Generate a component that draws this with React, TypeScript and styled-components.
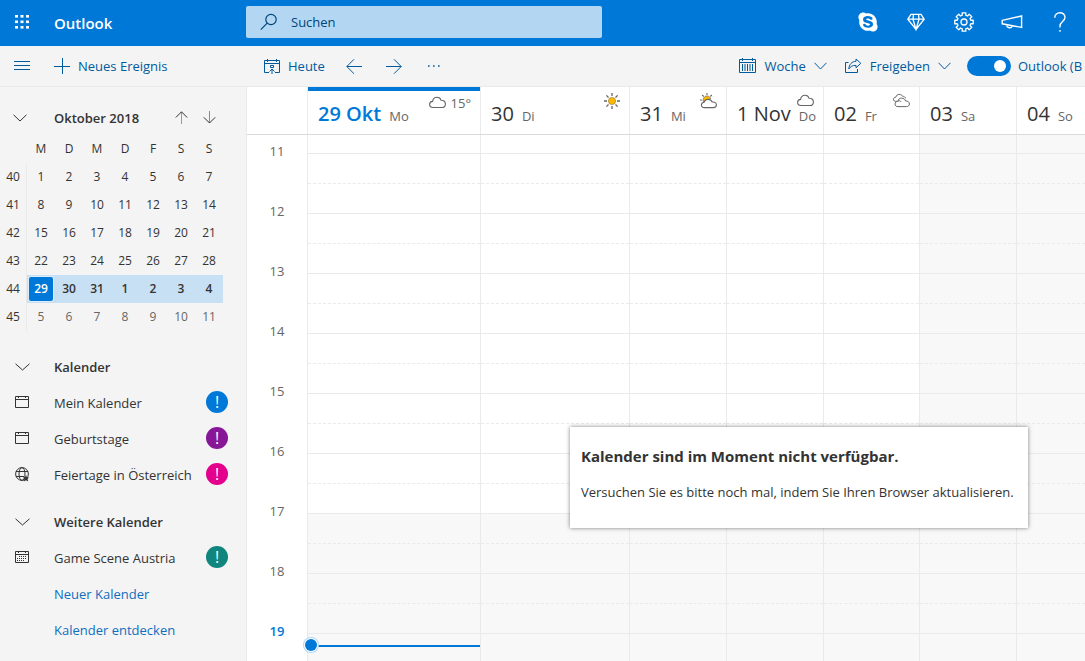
import React from "react";
import styled, { createGlobalStyle, css } from "styled-components";
import { FaSkype } from "react-icons/fa";

const color = {
  brand: "#0078d7",
  action: "#005a9e",
  link: "#106ebe",
  panel: "#f4f4f4",
  line: "#eaeaea",
  text: "#333333",
  muted: "#666666",
  off: "#f8f8f8",
};

const GlobalStyle = createGlobalStyle`
  * { box-sizing: border-box; }
  body {
    margin: 0;
    overflow: hidden;
    color: ${color.text};
    font-family: "Open Sans", "Noto Sans", sans-serif;
    font-size: 13px;
    line-height: 20px;
  }
  button, input { font: inherit; color: inherit; }
  h1, h2, h3, p, ul { margin: 0; padding: 0; font-size: inherit; }
  svg { display: block; flex: none; }
`;

const Page = styled.div`
  display: flex;
  flex-direction: column;
  height: 100vh;
`;

const IconButton = styled.button<{ $w?: number }>`
  display: flex;
  align-items: center;
  justify-content: center;
  flex: none;
  width: ${(p) => p.$w ?? 48}px;
  height: 100%;
  padding: 0;
  border: 0;
  background: none;
  cursor: pointer;
`;

/* top bar */
const TopBar = styled.header`
  display: flex;
  align-items: center;
  flex: none;
  height: 46px;
  padding: 0 1px 2px 0;
  background: ${color.brand};
  color: #fff;
`;

const Brand = styled.h1`
  width: 202px;
  padding: 2px 10px 0;
  font-size: 15px;
  font-weight: 600;
`;

const SearchBox = styled.label`
  display: flex;
  align-items: center;
  gap: 13px;
  flex: 0 1 356px;
  height: 32px;
  margin-right: auto;
  padding: 0 14px;
  border-radius: 2px;
  background: #b3d7f3;
  color: #004578;
`;

const SearchInput = styled.input`
  flex: 1;
  min-width: 0;
  padding: 0;
  border: 0;
  outline: 0;
  background: none;
  &::placeholder { color: #004578; opacity: 1; }
`;

/* command bar */
const CommandBar = styled.div`
  display: flex;
  align-items: center;
  flex: none;
  height: 41px;
  border-bottom: 1px solid ${color.line};
  background: ${color.panel};
  color: ${color.action};
`;

const Group = styled.div<{ $w?: number; $grow?: boolean }>`
  display: flex;
  align-items: center;
  gap: 2px;
  height: 100%;
  flex: ${(p) => (p.$grow ? "1 0 auto" : "none")};
  ${(p) => p.$w && css`width: ${p.$w}px;`}
`;

const Command = styled.button`
  display: flex;
  align-items: center;
  gap: 8px;
  height: 100%;
  padding: 0 8px;
  border: 0;
  background: none;
  white-space: nowrap;
  cursor: pointer;
`;

const Switch = styled.label`
  display: flex;
  align-items: center;
  gap: 7px;
  width: 118px;
  margin-left: 6px;
  overflow: hidden;
  white-space: nowrap;
`;

const Toggle = styled.input`
  appearance: none;
  display: flex;
  align-items: center;
  justify-content: flex-start;
  flex: none;
  width: 44px;
  height: 20px;
  margin: 0;
  padding: 0 5px;
  border-radius: 10px;
  background: #a6a6a6;
  &::before {
    content: "";
    width: 12px;
    height: 12px;
    border-radius: 50%;
    background: #fff;
  }
  &:checked {
    justify-content: flex-end;
    background: ${color.brand};
  }
`;

/* sidebar */
const Content = styled.div`
  display: flex;
  flex: 1;
  min-height: 0;
`;

const Sidebar = styled.aside`
  flex: none;
  width: 247px;
  overflow: hidden;
  border-right: 1px solid ${color.line};
  background: ${color.panel};
`;

const MonthBar = styled.div`
  display: flex;
  align-items: center;
  height: 28px;
  margin-top: 17px;
`;

const MonthTitle = styled.h2`
  width: 113px;
  margin-left: 14px;
  font-weight: 600;
  white-space: nowrap;
`;

const MiniCalendar = styled.table`
  margin-top: 3px;
  border-collapse: separate;
  border-spacing: 0;
  table-layout: fixed;
  width: 223px;
  font-size: 12px;
  text-align: center;
  th, td { height: 28px; padding: 0; font-weight: 400; }
`;

const WeekNumber = styled.th`
  border-right: 1px solid ${color.line};
`;

const Corner = styled.td`
  width: 27px;
`;

const Day = styled.td<{ $week?: boolean; $next?: boolean }>`
  ${(p) => p.$next && css`color: ${color.muted};`}
  ${(p) => p.$week && css`background: #c7e0f4; &&{ font-weight: 600; }`}
`;

const Today = styled.span`
  display: block;
  width: 24px;
  margin: 0 auto;
  border-radius: 2px;
  background: ${color.brand};
  color: #fff;
  line-height: 24px;
  box-shadow: 0 0 0 1px #deecf9;
`;

const Section = styled.section`
  margin-top: 18px;
  & + & { margin-top: 11px; }
`;

const SectionTitle = styled.h2`
  display: flex;
  align-items: center;
  gap: 24px;
  height: 36px;
  padding-left: 15px;
  font-weight: 600;
`;

const List = styled.ul`
  list-style: none;
`;

const Item = styled.li`
  display: flex;
  align-items: center;
  height: 36px;
  padding: 0 18px 0 15px;
  white-space: nowrap;
`;

const ItemName = styled.span`
  flex: 1;
  margin-left: 25px;
`;

const Alert = styled.span<{ $color: string }>`
  width: 22px;
  height: 22px;
  margin-bottom: 2px;
  border-radius: 50%;
  background: ${(p) => p.$color};
  color: #fff;
  font-size: 16px;
  line-height: 22px;
  text-align: center;
`;

const SideLink = styled.a`
  margin-left: 39px;
  color: ${color.link};
  text-decoration: none;
`;

/* week view */
const columns = "60px 173fr 149fr 97fr 97fr 96fr 97fr 69fr";

const Week = styled.main`
  position: relative;
  display: flex;
  flex-direction: column;
  flex: 1;
  min-width: 0;
  background: #fff;
`;

const DayHeaders = styled.div`
  display: grid;
  grid-template-columns: ${columns};
  flex: none;
  height: 48px;
  border-bottom: 1px solid #dadada;
`;

const DayHeader = styled.div<{ $today?: boolean }>`
  position: relative;
  display: flex;
  align-items: baseline;
  gap: 8px;
  min-width: 0;
  padding: 15px 0 0 10px;
  border-left: 1px solid ${color.line};
  line-height: 24px;
  white-space: nowrap;
  ${(p) => p.$today && css`box-shadow: inset 0 4px ${color.brand};`}
`;

const DateLabel = styled.h3<{ $today?: boolean }>`
  font-size: 20px;
  font-weight: ${(p) => (p.$today ? 600 : 400)};
  ${(p) => p.$today && css`color: ${color.brand};`}
`;

const Weekday = styled.span`
  color: ${color.muted};
`;

const Weather = styled.span`
  position: absolute;
  top: 6px;
  right: 9px;
  display: flex;
  align-items: center;
  gap: 5px;
  color: ${color.muted};
  line-height: 20px;
`;

const Hours = styled.div`
  display: grid;
  grid-template-columns: ${columns};
  flex: 1;
  min-height: 0;
  overflow: hidden;
`;

const HourLabels = styled.div`
  text-align: center;
`;

const Hour = styled.div<{ $now?: boolean }>`
  height: 32px;
  margin-bottom: 28px;
  color: ${(p) => (p.$now ? color.brand : color.muted)};
  font-weight: ${(p) => (p.$now ? 600 : 400)};
  line-height: 32px;
`;

const DayColumn = styled.div<{ $weekend?: boolean }>`
  border-left: 1px solid ${color.line};
  background: ${(p) => (p.$weekend ? color.off : "#fff")};
`;

const Slot = styled.div<{ $half?: boolean; $off?: boolean }>`
  position: relative;
  height: 30px;
  border-top: 1px ${(p) => (p.$half ? "dashed" : "solid")} ${color.line};
  ${(p) => p.$off && css`background: ${color.off};`}
  &:first-child { height: 18px; border-top: 0; }
`;

const NowLine = styled.div`
  position: absolute;
  top: 11px;
  left: 9px;
  right: 0;
  height: 2px;
  background: ${color.brand};
  &::before {
    content: "";
    position: absolute;
    top: -6px;
    left: -12px;
    width: 12px;
    height: 12px;
    border-radius: 50%;
    background: ${color.brand};
    box-shadow: 0 0 0 1px #fff, 0 0 0 2px #b3d7f3;
  }
`;

const Notice = styled.div`
  position: absolute;
  top: 340px;
  right: 57px;
  width: 458px;
  height: 101px;
  padding: 19px 11px;
  background: #fff;
  box-shadow: 0 0 4px rgba(0, 0, 0, 0.5);
  white-space: nowrap;
`;

const NoticeTitle = styled.h2`
  margin-bottom: 16px;
  font-size: 15px;
  font-weight: 700;
`;

/* icons */
const Svg = ({ w, h, sw = 1, children }: { w: number; h: number; sw?: number; children: React.ReactNode }) => (
  <svg width={w} height={h} viewBox={`0 0 ${w} ${h}`} fill="none" stroke="currentColor" strokeWidth={sw} aria-hidden="true">
    {children}
  </svg>
);

const Waffle = () => (
  <Svg w={14} h={14}>
    <g fill="currentColor" stroke="none">
      {[0, 5.5, 11].map((y) => [0, 5.5, 11].map((x) => <rect key={`${x}-${y}`} x={x} y={y} width="3" height="2.6" />))}
    </g>
  </Svg>
);
const SearchIcon = () => (
  <Svg w={18} h={18} sw={1.2}>
    <circle cx="11" cy="6.5" r="5.2" />
    <path d="M7.2 10.2 L.8 16.6" />
  </Svg>
);
const Diamond = () => (
  <Svg w={18} h={18} sw={1.3}>
    <path d="M4 1.3 H14 L17.2 6.1 L9 16.5 L.8 6.1 Z M.8 6.1 H17.2 M6.5 1.3 L6 6.1 L9 16.5 L12 6.1 L11.5 1.3" />
  </Svg>
);
const Gear = () => {
  const points: string[] = [];
  for (let i = 0; i < 8; i++) {
    [[-0.25, 7], [-0.2, 9.4], [0.2, 9.4], [0.25, 7]].forEach(([d, r]) => {
      const a = (i * Math.PI) / 4 + d;
      points.push(`${(10 + r * Math.sin(a)).toFixed(2)},${(10 - r * Math.cos(a)).toFixed(2)}`);
    });
  }
  return (
    <Svg w={20} h={20} sw={1.3}>
      <polygon points={points.join(" ")} strokeLinejoin="round" />
      <circle cx="10" cy="10" r="3" />
    </Svg>
  );
};
const Megaphone = () => (
  <Svg w={22} h={14} sw={1.4}>
    <path d="M1.2 5.4 L20.6 1 V12.4 L1.2 8.8 Z M5.6 9.8 C5.8 13.6 10.8 13.6 11.2 10.8" />
  </Svg>
);
const Help = () => (
  <Svg w={12} h={20} sw={1.4}>
    <path d="M.8 5.8 C.8 -.8 11 -.8 11 5.2 C11 9.4 6 9.6 6 14 V15.6 M6 18 V19.8" />
  </Svg>
);
const Menu = () => (
  <Svg w={16} h={10}><path d="M0 .5 H16 M0 4.5 H16 M0 8.5 H16" /></Svg>
);
const Plus = () => (
  <Svg w={16} h={16}><path d="M8.5 0 V16 M0 8.5 H16" /></Svg>
);
const TodayIcon = () => (
  <Svg w={16} h={18}>
    <path d="M5 15.5 H.5 V3.5 H15.5 V15.5 H11 M.5 6.5 H15.5 M3.5 2 V5 M12.5 2 V5 M6.5 8.5 H9.5 V10.5 H6.5 Z M8 17 V12 M5.5 14.5 L8 12 L10.5 14.5" />
  </Svg>
);
const ArrowLeft = () => (
  <Svg w={16} h={16}><path d="M.8 8.5 H16 M8 1.3 L.8 8.5 L8 15.7" /></Svg>
);
const ArrowRight = () => (
  <Svg w={16} h={16}><path d="M0 8.5 H15.2 M8 1.3 L15.2 8.5 L8 15.7" /></Svg>
);
const More = () => (
  <Svg w={12} h={2}>
    <path d="M0 1 H1.6 M5 1 H6.6 M10 1 H11.6" strokeWidth="1.6" />
  </Svg>
);
const WeekIcon = () => (
  <Svg w={17} h={16}>
    <path d="M.5 1.5 H16.5 V14.5 H.5 Z M.5 4.5 H16.5 M3.5 0 V3 M13.5 0 V3 M3.5 6 V13 M6 6 V13 M8.5 6 V13 M11 6 V13 M13.5 6 V13" />
  </Svg>
);
const Share = () => (
  <Svg w={17} h={16}>
    <path d="M3.5 4.5 H.5 V14.5 H12.5 V11 M11 1 L15.8 5.3 L11 9.8 V7.4 C7.5 7.2 5.4 8.6 3.8 11 C4.2 6.4 6.6 3.6 11 3.3 Z" />
  </Svg>
);
const Chevron = ({ w = 13 }: { w?: number }) => (
  <Svg w={w} h={8}><path d={`M.5 .8 L${w / 2} 7 L${w - 0.5} .8`} /></Svg>
);
const ArrowUp = () => (
  <Svg w={14} h={14}><path d="M7.5 13 V.8" stroke="#d08c4a" /><path d="M1.8 6.5 L7.5 .8 L13.2 6.5" /></Svg>
);
const ArrowDown = () => (
  <Svg w={14} h={14}><path d="M7.5 0 V12" stroke="#c87a3c" /><path d="M1.8 6.3 L7.5 12 L13.2 6.3" /></Svg>
);
const CalendarIcon = () => (
  <Svg w={14} h={14}><path d="M.5 .5 H13.5 V11.5 H.5 Z M.5 3.5 H13.5 M3.5 0 V2 M10.5 0 V2" /></Svg>
);
const CalendarDots = () => (
  <Svg w={14} h={14}>
    <path d="M.5 .5 H13.5 V11.5 H.5 Z M.5 3.5 H13.5 M3.5 0 V2 M10.5 0 V2" />
    <path d="M4 5.5 H12 M2 7.5 H12 M2 9.5 H10" strokeDasharray="1 1" />
  </Svg>
);
const Globe = () => (
  <Svg w={14} h={16}>
    <circle cx="7" cy="7" r="6.4" />
    <ellipse cx="7" cy="7" rx="3" ry="6.4" />
    <path d="M1 4.5 H13 M1 9.5 H9" />
    <path d="M11 8 L12 10.2 L14 10.4 L12.6 12 L13.2 14.4 L11 13.2 L8.8 14.4 L9.4 12 L8 10.4 L10.1 10.2 Z" fill="currentColor" stroke="none" />
  </Svg>
);
const cloudPath = "M4.2 11.5 C1.8 11.5 .6 10.2 .6 8.5 C.6 6.8 1.8 5.5 3.6 5.4 C4 2.6 5.8 1.3 8 1.3 C10.2 1.3 11.6 2.6 12.1 4.3 C14.8 4.2 16.4 5.7 16.4 7.9 C16.4 10.2 15 11.5 13 11.5 Z";
const Cloud = () => (
  <Svg w={17} h={16} sw={1.1}><path d={cloudPath} transform="translate(0 1)" /></Svg>
);
const Sun = () => (
  <Svg w={16} h={16} sw={1.3}>
    <path d="M8 0 V3 M8 13 V16 M0 8 H3 M13 8 H16 M2.4 2.4 L4.5 4.5 M11.5 11.5 L13.6 13.6 M2.4 13.6 L4.5 11.5 M11.5 4.5 L13.6 2.4" />
    <circle cx="8" cy="8" r="3.6" fill="#ffb900" stroke="#8a7340" strokeWidth=".6" />
  </Svg>
);
const SunCloud = () => (
  <Svg w={17} h={16} sw={1.1}>
    <path d="M7 0 V2 M2.2 2 L3.7 3.5 M11.8 2 L10.3 3.5 M0 7 H2" />
    <path d="M3.5 9 C2.4 5.4 4.4 3 7 3 C9 3 10.2 4.2 10.6 6 Z" fill="#ffb900" strokeWidth=".7" />
    <path d="M4.4 14.6 C2.4 14.6 1.4 13.4 1.4 12 C1.4 10.4 2.6 9.4 4.2 9.2 C4.8 7.4 6.2 6.4 8 6.4 C10 6.4 11.4 7.2 12.2 9 C14.8 8.6 16.4 10 16.4 11.8 C16.4 13.5 15.2 14.6 13.4 14.6 Z" fill="#fff" />
  </Svg>
);
const Clouds = () => (
  <Svg w={17} h={16}>
    <path d="M3.8 8.2 C1.6 8.8 .4 7.6 .5 6.2 C.6 4.8 1.7 4.2 2.8 4.2 C3.4 2.2 4.6 1.4 6.2 1.4 C7.8 1.4 8.8 2 9.4 3.2 C11 3.2 12.2 4 12.5 5.4" />
    <path d="M5 13.6 C3 13.6 2 12.4 2 11 C2 9.4 3.2 8.4 4.8 8.4 C5.2 6.2 6.8 5 8.6 5.2 C10.6 5.2 12 6.2 12.6 8 C15 7.8 16.4 9.2 16.4 11 C16.4 12.6 15.2 13.6 13.6 13.6 Z" fill="#fff" />
    <path d="M5 8.2 C6.2 7.4 7.6 7.8 8 8.8" />
  </Svg>
);

/* data */
const weeks = [
  { n: 40, days: [1, 2, 3, 4, 5, 6, 7] },
  { n: 41, days: [8, 9, 10, 11, 12, 13, 14] },
  { n: 42, days: [15, 16, 17, 18, 19, 20, 21] },
  { n: 43, days: [22, 23, 24, 25, 26, 27, 28] },
  { n: 44, days: [29, 30, 31, 1, 2, 3, 4] },
  { n: 45, days: [5, 6, 7, 8, 9, 10, 11] },
];

const days = [
  { date: "29 Okt", name: "Mo", weather: <><Cloud />15°</>, today: true },
  { date: "30", name: "Di", weather: <Sun /> },
  { date: "31", name: "Mi", weather: <SunCloud /> },
  { date: "1 Nov", name: "Do", weather: <Cloud /> },
  { date: "02", name: "Fr", weather: <Clouds /> },
  { date: "03", name: "Sa", weekend: true },
  { date: "04", name: "So", weekend: true },
];

const hours = [11, 12, 13, 14, 15, 16, 17, 18, 19];
const slots = [10.5, ...hours.flatMap((h) => [h, h + 0.5])].slice(0, -1);

const calendars = [
  { name: "Mein Kalender", icon: <CalendarIcon />, color: "#0078d7" },
  { name: "Geburtstage", icon: <CalendarIcon />, color: "#881798" },
  { name: "Feiertage in Österreich", icon: <Globe />, color: "#e3008c" },
];

export default function App() {
  return (
    <>
      <GlobalStyle />
      <Page>
        <TopBar>
          <IconButton $w={44} aria-label="App-Startfeld"><Waffle /></IconButton>
          <Brand>Outlook</Brand>
          <SearchBox>
            <SearchIcon />
            <SearchInput type="text" placeholder="Suchen" aria-label="Suchen" />
          </SearchBox>
          <IconButton aria-label="Skype"><FaSkype size={22} /></IconButton>
          <IconButton aria-label="Premium"><Diamond /></IconButton>
          <IconButton aria-label="Einstellungen"><Gear /></IconButton>
          <IconButton aria-label="Neuigkeiten"><Megaphone /></IconButton>
          <IconButton aria-label="Hilfe"><Help /></IconButton>
        </TopBar>

        <CommandBar>
          <Group $w={256}>
            <IconButton $w={44} aria-label="Menü"><Menu /></IconButton>
            <Command><Plus />Neues Ereignis</Command>
          </Group>
          <Group $grow>
            <Command><TodayIcon />Heute</Command>
            <IconButton $w={38} aria-label="Vorherige Woche"><ArrowLeft /></IconButton>
            <IconButton $w={38} aria-label="Nächste Woche"><ArrowRight /></IconButton>
            <IconButton $w={38} aria-label="Mehr"><More /></IconButton>
          </Group>
          <Group>
            <Command><WeekIcon />Woche<Chevron /></Command>
            <Command><Share />Freigeben<Chevron /></Command>
            <Switch>
              <Toggle type="checkbox" role="switch" defaultChecked />
              Outlook (B
            </Switch>
          </Group>
        </CommandBar>

        <Content>
          <Sidebar>
            <MonthBar>
              <IconButton $w={40} aria-label="Einklappen"><Chevron w={14} /></IconButton>
              <MonthTitle>Oktober 2018</MonthTitle>
              <IconButton $w={28} aria-label="Vorheriger Monat"><ArrowUp /></IconButton>
              <IconButton $w={28} aria-label="Nächster Monat"><ArrowDown /></IconButton>
            </MonthBar>
            <MiniCalendar>
              <thead>
                <tr>
                  <Corner />
                  {["M", "D", "M", "D", "F", "S", "S"].map((d, i) => <th key={i} scope="col">{d}</th>)}
                </tr>
              </thead>
              <tbody>
                {weeks.map((w) => (
                  <tr key={w.n}>
                    <WeekNumber scope="row">{w.n}</WeekNumber>
                    {w.days.map((d) => (
                      <Day key={d} $week={w.n === 44} $next={w.n === 45}>
                        {d === 29 ? <Today>{d}</Today> : d}
                      </Day>
                    ))}
                  </tr>
                ))}
              </tbody>
            </MiniCalendar>

            <Section>
              <SectionTitle><Chevron w={15} />Kalender</SectionTitle>
              <List>
                {calendars.map((c) => (
                  <Item key={c.name}>
                    {c.icon}
                    <ItemName>{c.name}</ItemName>
                    <Alert $color={c.color}>!</Alert>
                  </Item>
                ))}
              </List>
            </Section>
            <Section>
              <SectionTitle><Chevron w={15} />Weitere Kalender</SectionTitle>
              <List>
                <Item>
                  <CalendarDots />
                  <ItemName>Game Scene Austria</ItemName>
                  <Alert $color="#10857d">!</Alert>
                </Item>
                <Item><SideLink href="#neu">Neuer Kalender</SideLink></Item>
                <Item><SideLink href="#entdecken">Kalender entdecken</SideLink></Item>
              </List>
            </Section>
          </Sidebar>

          <Week>
            <DayHeaders>
              <span />
              {days.map((d) => (
                <DayHeader key={d.date} $today={d.today}>
                  <DateLabel $today={d.today}>{d.date}</DateLabel>
                  <Weekday>{d.name}</Weekday>
                  {d.weather && <Weather>{d.weather}</Weather>}
                </DayHeader>
              ))}
            </DayHeaders>
            <Hours>
              <HourLabels>
                {hours.map((h) => <Hour key={h} $now={h === 19}>{h}</Hour>)}
              </HourLabels>
              {days.map((d) => (
                <DayColumn key={d.date} $weekend={d.weekend}>
                  {slots.map((s) => (
                    <Slot key={s} $half={s % 1 !== 0} $off={s >= 17}>
                      {d.today && s === 19 && <NowLine />}
                    </Slot>
                  ))}
                </DayColumn>
              ))}
            </Hours>
            <Notice role="alert">
              <NoticeTitle>Kalender sind im Moment nicht verfügbar.</NoticeTitle>
              <p>Versuchen Sie es bitte noch mal, indem Sie Ihren Browser aktualisieren.</p>
            </Notice>
          </Week>
        </Content>
      </Page>
    </>
  );
}
